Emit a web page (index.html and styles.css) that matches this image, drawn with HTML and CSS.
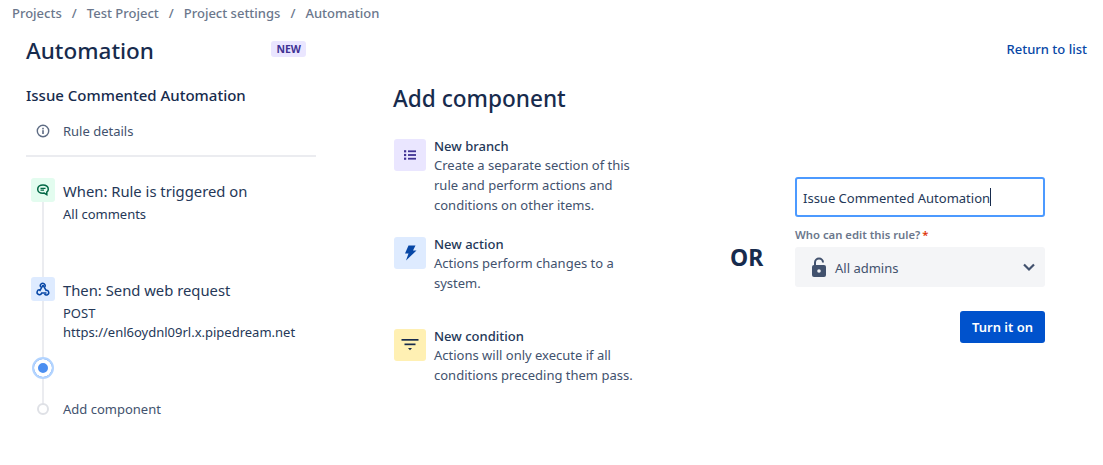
FILE: index.html
```html
<!DOCTYPE html>
<html lang="en">
<head>
  <meta charset="UTF-8" />
  <title>Automation</title>
  <link rel="stylesheet" href="styles.css">
</head>
<body>
  <nav class="crumbs">
    <span>Projects</span><i>/</i><span>Test Project</span><i>/</i><span>Project settings</span><i>/</i><span>Automation</span>
  </nav>

  <div class="page">
    <aside class="left">
      <div class="title-row">
        <h1>Automation</h1>
        <span class="lozenge">NEW</span>
      </div>
      <h2>Issue Commented Automation</h2>
      <div class="details">
        <svg class="info" width="16" height="16" viewBox="0 0 16 16"><circle cx="8" cy="8" r="5.7" fill="none" stroke="#5e6c84" stroke-width="1.4"/><rect x="7.2" y="7.2" width="1.6" height="3.8" fill="#5e6c84"/><rect x="7.2" y="4.8" width="1.6" height="1.6" fill="#5e6c84"/></svg>
        <span>Rule details</span>
      </div>
      <div class="rule"></div>

      <div class="steps">
        <div class="step step-when">
          <div class="step-icon green">
            <svg width="16" height="16" viewBox="0 0 16 16"><path d="M8 3C4.9 3 2.7 4.8 2.7 7.2c0 2.3 2.2 4 5 4 .6 0 1 0 1.5-.1l2.600 1.500v-2.600c1-.7 1.500-1.700 1.500-2.800C13.300 4.800 11.100 3 8 3z" fill="none" stroke="#006644" stroke-width="1.500"/><path d="M5.500 6.300h5M5.500 8.100h3.500" stroke="#006644" stroke-width="1.200"/></svg>
          </div>
          <div class="step-text">
            <div class="step-title">When: Rule is triggered on</div>
            <div class="step-sub">All comments</div>
          </div>
        </div>
        <div class="step step-then">
          <div class="step-icon blue">
            <svg width="16" height="16" viewBox="0 0 16 16"><g fill="none" stroke="#0747a6" stroke-width="1.500"><path d="M5.900 6.300a2.400 2.400 0 1 1 3.900-.3"/><path d="M8 4.100l-3.400 6.100"/><path d="M8 4.100l3.100 5.300a2.300 2.300 0 1 1-1.600 3.500"/><path d="M5.200 8.900a2.400 2.400 0 1 0 1.500 3.200h4.800"/></g></svg>
          </div>
          <div class="step-text">
            <div class="step-title">Then: Send web request</div>
            <div class="step-sub">POST</div>
            <div class="step-sub">https://enl6oydnl09rl.x.pipedream.net</div>
          </div>
        </div>
        <div class="dot-row"><span class="dot-active"></span></div>
        <div class="add-row">
          <span class="dot-empty"></span>
          <span class="add-label">Add component</span>
        </div>
      </div>
    </aside>

    <main class="middle">
      <h3>Add component</h3>
      <div class="comp comp-branch">
        <div class="comp-icon purple">
          <svg width="16" height="16" viewBox="0 0 16 16" fill="#403294"><rect x="2" y="3.200" width="2.200" height="2.200"/><rect x="2" y="6.900" width="2.200" height="2.200"/><rect x="2" y="10.600" width="2.200" height="2.200"/><rect x="6" y="3.400" width="8" height="1.800"/><rect x="6" y="7.100" width="8" height="1.800"/><rect x="6" y="10.800" width="8" height="1.800"/></svg>
        </div>
        <div class="comp-text">
          <div class="comp-name">New branch</div>
          <p>Create a separate section of this<br>rule and perform actions and<br>conditions on other items.</p>
        </div>
      </div>
      <div class="comp comp-action">
        <div class="comp-icon sky">
          <svg width="16" height="18" viewBox="0 0 16 18"><path d="M6.500 1.500h7L11 6.500h3.500L4 16.500l2.500-7H3z" fill="#0747a6"/></svg>
        </div>
        <div class="comp-text">
          <div class="comp-name">New action</div>
          <p>Actions perform changes to a<br>system.</p>
        </div>
      </div>
      <div class="comp">
        <div class="comp-icon yellow">
          <svg width="18" height="16" viewBox="0 0 18 16" fill="#172b4d"><rect x="0.500" y="2" width="17" height="1.700"/><rect x="3.500" y="6.500" width="11" height="1.700"/><path d="M7 11h4l-2 2.200z"/></svg>
        </div>
        <div class="comp-text">
          <div class="comp-name">New condition</div>
          <p>Actions will only execute if all<br>conditions preceding them pass.</p>
        </div>
      </div>
    </main>

    <div class="or">OR</div>

    <section class="right">
      <a class="return" href="#">Return to list</a>
      <div class="name-input"><span class="name-text">Issue Commented Automation</span><span class="caret"></span></div>
      <label class="field-label">Who can edit this rule?<em>*</em></label>
      <div class="select">
        <svg width="16" height="22" viewBox="0 0 16 22"><path d="M4 10V6.500a4 4 0 0 1 8 0" fill="none" stroke="#42526e" stroke-width="2"/><rect x="1" y="9" width="14" height="12" rx="2" fill="#42526e"/><circle cx="8" cy="15" r="1.800" fill="#f4f5f7"/></svg>
        <span class="select-value">All admins</span>
        <svg class="chev" width="14" height="10" viewBox="0 0 14 10"><path d="M2 2.500l5 5 5-5" fill="none" stroke="#42526e" stroke-width="2.200"/></svg>
      </div>
      <div class="actions"><button class="turn-on">Turn it on</button></div>
    </section>
  </div>
</body>
</html>
```

FILE: styles.css
```css
* { box-sizing: border-box; }
html, body { height: 100%; }
body {
  margin: 0;
  overflow: hidden;
  background: #fff;
  color: #172b4d;
  font-family: 'Noto Sans', 'Open Sans', sans-serif;
  font-size: 13px;
}
.crumbs {
  display: flex;
  padding: 5px 0 0 12px;
  height: 27px;
  color: #6b778c;
  font-size: 13px;
  line-height: 17px;
  font-weight: 500;
}
.crumbs i { font-style: normal; margin: 0 10px; }
.page { display: flex; }

.left { width: 393px; padding-left: 26px; flex: none; }
.title-row {
  display: flex;
  width: 280px;
  justify-content: space-between;
  align-items: flex-start;
}
h1 {
  margin: 8px 0 0;
  font-size: 22.500px;
  line-height: 32px;
  font-weight: 500;
}
.lozenge {
  margin-top: 14px;
  background: #eae6ff;
  color: #403294;
  font-size: 10.500px;
  font-weight: 700;
  line-height: 16px;
  padding: 0 5px;
  border-radius: 3px;
}
h2 {
  margin: 18px 0 0;
  font-size: 15px;
  line-height: 20px;
  font-weight: 500;
}
.details {
  display: flex;
  align-items: center;
  height: 20px;
  margin-top: 16px;
  padding-left: 9px;
  color: #42526e;
}
.details span { margin-left: 12px; }
.rule { width: 290px; height: 2px; margin-top: 14px; background: #ebecf0; }

.steps { position: relative; padding-top: 21px; }
.steps::before {
  content: "";
  position: absolute;
  left: 16px;
  top: 30px;
  height: 220px;
  width: 2px;
  background: #ebecf0;
}
.step { position: relative; display: flex; }
.step-when { height: 99px; }
.step-then { height: 80px; }
.step-icon {
  width: 24px;
  height: 24px;
  margin-left: 5px;
  flex: none;
  display: flex;
  align-items: center;
  justify-content: center;
  border-radius: 3px;
}
.green { background: #e3fcef; }
.blue { background: #deebff; }
.step-text { margin-left: 8px; padding-top: 2px; color: #253858; }
.step-title { font-size: 14.800px; line-height: 22px; }
.step-sub { line-height: 19px; }
.step-title + .step-sub { margin-top: 3px; }

.dot-row { position: relative; height: 22px; padding-left: 6px; }
.dot-active {
  display: block;
  width: 22px;
  height: 22px;
  border-radius: 50%;
  background: #4c8ff0;
  border: 2px solid #b3d4ff;
  box-shadow: inset 0 0 0 4px #fff;
}
.add-row { position: relative; display: flex; align-items: center; margin-top: 20px; }
.dot-empty {
  width: 12px;
  height: 12px;
  margin-left: 11px;
  border-radius: 50%;
  background: #fff;
  border: 2px solid #dfe1e6;
}
.add-label { margin-left: 14px; color: #42526e; line-height: 18px; padding-top: 1px; }

.middle { width: 337px; flex: none; }
h3 {
  margin: 56px 0 0;
  font-size: 22.600px;
  line-height: 32px;
  font-weight: 500;
}
.comp { display: flex; gap: 8px; padding-left: 1px; }
.comp-branch { margin-top: 21px; height: 98px; }
.comp-action { height: 92px; }
.comp-icon {
  width: 32px;
  height: 32px;
  flex: none;
  display: flex;
  align-items: center;
  justify-content: center;
  border-radius: 3px;
  margin-top: 3px;
}
.purple { background: #eae6ff; }
.sky { background: #deebff; }
.yellow { background: #fff0b3; }
.comp-text { padding-top: 2px; }
.comp-name { font-weight: 500; line-height: 17px; color: #253858; }
.comp p { margin: 0; line-height: 20px; color: #42526e; }

.or {
  width: 65px;
  flex: none;
  margin-top: 214px;
  font-size: 23px;
  line-height: 32px;
  font-weight: 700;
}

.right { width: 250px; flex: none; position: relative; }
.return {
  position: absolute;
  top: 13px;
  right: -42px;
  color: #0747a6;
  font-weight: 500;
  font-size: 13px;
  text-decoration: none;
  white-space: nowrap;
}
.name-input {
  display: flex;
  align-items: center;
  height: 40px;
  margin-top: 150px;
  padding-left: 6px;
  border: 2px solid #4c9aff;
  border-radius: 3px;
  color: #253858;
}
.name-text { padding-top: 1px; }
.caret { width: 1px; height: 18px; background: #172b4d; }
.field-label {
  display: block;
  margin-top: 10px;
  color: #6b778c;
  font-size: 11.300px;
  font-weight: 600;
  line-height: 16px;
}
.field-label em { color: #de350b; font-style: normal; margin-left: 2px; }
.select {
  display: flex;
  align-items: center;
  height: 40px;
  margin-top: 4px;
  padding: 0 9px 0 16px;
  background: #f4f5f7;
  border-radius: 3px;
}
.select-value { margin-left: 8px; padding-top: 1px; color: #42526e; flex: 1; }
.actions { display: flex; justify-content: flex-end; margin-top: 24px; }
.turn-on {
  width: 85px;
  height: 32px;
  border: 0;
  border-radius: 3px;
  background: #0052cc;
  color: #fff;
  font-family: inherit;
  font-size: 13px;
  font-weight: 600;
}
```
